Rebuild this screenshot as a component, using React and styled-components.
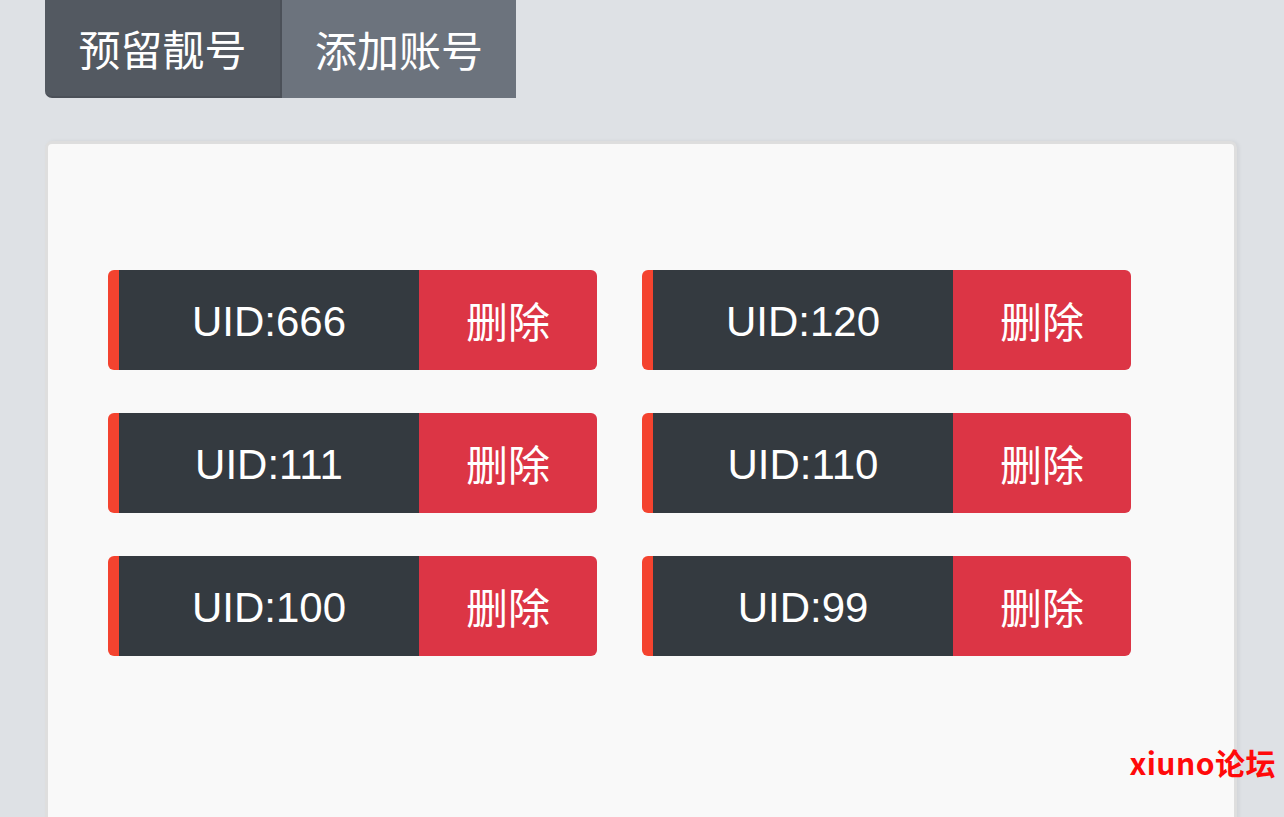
import React from "react";
import styled, { createGlobalStyle } from "styled-components";

const GlobalStyle = createGlobalStyle`
  html, body {
    margin: 0;
    padding: 0;
    background: #dee1e5;
    font-family: "Liberation Sans", "Noto Sans CJK SC", sans-serif;
    overflow: hidden;
  }
`;

const Page = styled.div`
  position: relative;
  width: 1284px;
  height: 817px;
  padding: 0 47px 0 45px;
  box-sizing: border-box;
  overflow: hidden;
`;

const TabGroup = styled.div`
  display: flex;
  height: 98px;
`;

const Tab = styled.div`
  display: flex;
  align-items: center;
  justify-content: center;
  width: ${(p) => p.$width}px;
  box-sizing: border-box;
  font-family: "Noto Sans CJK SC", sans-serif;
  font-size: 42px;
  color: #fff;
  background: ${(p) => (p.$active ? "#535961" : "#6c737d")};
  border-right: ${(p) => (p.$active ? "2px solid #4b5058" : "none")};
  border-bottom: ${(p) => (p.$active ? "2px solid #4b5058" : "none")};
  border-radius: ${(p) => (p.$active ? "0 0 0 7px" : "0")};
  padding-bottom: 2px;
`;

const Card = styled.div`
  margin-top: 43px;
  height: 700px;
  background: #f9f9f9;
  border: 3px solid #dedede;
  border-bottom: none;
  border-radius: 7px 7px 0 0;
  box-shadow: 2px 0 4px rgba(0, 0, 0, 0.06);
  padding: 126px 0 0 60px;
  box-sizing: border-box;
`;

const Grid = styled.div`
  display: grid;
  grid-template-columns: 489px 489px;
  column-gap: 45px;
  row-gap: 43px;
`;

const Item = styled.div`
  display: flex;
  height: 100px;
  border-radius: 6px;
  overflow: hidden;
  border-left: 11px solid #f4432f;
`;

const Uid = styled.div`
  width: 300px;
  display: flex;
  align-items: center;
  justify-content: center;
  background: #343a40;
  color: #fff;
  font-size: 42px;
  padding-top: 4px;
  box-sizing: border-box;
`;

const DeleteButton = styled.div`
  flex: 1;
  display: flex;
  align-items: center;
  justify-content: center;
  background: #dc3545;
  color: #fff;
  font-family: "Noto Sans CJK SC", sans-serif;
  font-size: 42px;
  padding-bottom: 2px;
  box-sizing: border-box;
`;

const Watermark = styled.div`
  position: absolute;
  right: 8px;
  bottom: 33px;
  color: #ff0a0a;
  font-family: "Noto Sans CJK SC", sans-serif;
  font-weight: 700;
  font-size: 30px;
  letter-spacing: 0.5px;
`;

const uids = [666, 120, 111, 110, 100, 99];

export default function App() {
  return (
    <Page>
      <GlobalStyle />
      <TabGroup>
        <Tab $active $width={237}>预留靓号</Tab>
        <Tab $width={234}>添加账号</Tab>
      </TabGroup>
      <Card>
        <Grid>
          {uids.map((uid) => (
            <Item key={uid}>
              <Uid>UID:{uid}</Uid>
              <DeleteButton>删除</DeleteButton>
            </Item>
          ))}
        </Grid>
      </Card>
      <Watermark>xiuno论坛</Watermark>
    </Page>
  );
}
